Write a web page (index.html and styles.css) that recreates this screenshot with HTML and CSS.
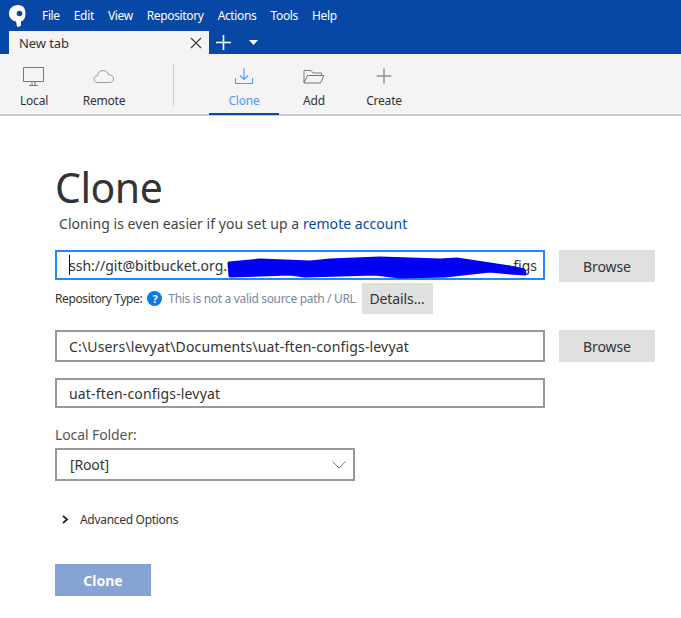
FILE: index.html
```html
<!DOCTYPE html>
<html lang="en">
<head>
<meta charset="utf-8">
<title>Clone</title>
<link rel="stylesheet" href="styles.css">
</head>
<body>
<header class="titlebar">
  <div class="menubar">
    <svg class="logo" width="26" height="26" viewBox="0 0 26 26"><path d="M3 10.500C3 5.500 7 2 12 2C17.500 2 19.500 6 19.500 10.500C19.500 15 18 17.500 15 18.500L15 22C15 23.500 13 24 11 23.500L10 18.500C5.500 17.500 3 14.500 3 10.500Z" fill="#fff"/><circle cx="13.500" cy="10.500" r="2.800" fill="#0747a6"/></svg>
    <nav class="menu"><span>File</span><span>Edit</span><span>View</span><span>Repository</span><span>Actions</span><span>Tools</span><span>Help</span></nav>
  </div>
  <div class="tabrow">
    <div class="tab"><span>New tab</span>
      <svg width="12" height="12" viewBox="0 0 12 12"><path d="M1 1L11 11M11 1L1 11" stroke="#444" stroke-width="1.300" fill="none"/></svg>
    </div>
    <svg class="plus" width="15" height="15" viewBox="0 0 15 15"><path d="M7.500 0V15M0 7.500H15" stroke="#fff" stroke-width="1.600"/></svg>
    <svg class="caret" width="9" height="5" viewBox="0 0 9 5"><path d="M0 0H9L4.500 5Z" fill="#fff"/></svg>
  </div>
</header>
<div class="toolbar">
  <div class="tool tool-first">
    <svg width="22" height="20" viewBox="0 0 22 20"><path d="M.5.500H20.500V14.500H.5ZM6 18.500H15M9 15V18M12 15V18" stroke="#777" fill="none"/></svg>
    <span>Local</span>
  </div>
  <div class="tool">
    <svg width="22" height="20" viewBox="0 0 22 20"><path d="M5 15.500C2.500 15.500 1 14 1 12C1 10 2.500 8.800 4.300 8.800C4.800 5.500 7.200 3.500 10 3.500C12.800 3.500 14.800 5.300 15.500 7.800C18.500 7.600 20.500 9.300 20.500 11.700C20.500 14 18.800 15.500 16.500 15.500Z" stroke="#999" fill="none"/></svg>
    <span>Remote</span>
  </div>
  <div class="divider"></div>
  <div class="tool active">
    <svg width="22" height="20" viewBox="0 0 22 20"><path d="M11 1V12M7 8.500L11 12.500L15 8.500M2.500 11V16.500H19.500V11" stroke="#4c9aff" stroke-width="1.100" fill="none"/></svg>
    <span>Clone</span>
  </div>
  <div class="tool">
    <svg width="22" height="20" viewBox="0 0 22 20"><path d="M1 16V3.500H8L10 6H18.500V8.500M1 16L4.500 8.500H21L17.500 16Z" stroke="#777" fill="none"/></svg>
    <span>Add</span>
  </div>
  <div class="tool">
    <svg width="22" height="20" viewBox="0 0 22 20"><path d="M11 1.500V16.500M3.500 9H18.500" stroke="#666" fill="none"/></svg>
    <span>Create</span>
  </div>
</div>
<main class="content">
  <h1 class="title">Clone</h1>
  <p class="lead">Cloning is even easier if you set up a <a class="link">remote account</a></p>
  <div class="row">
    <div class="field focus"><i class="cursor"></i><span>ssh://git@bitbucket.org.</span><span class="end">figs</span></div>
    <button class="btn">Browse</button>
  </div>
  <div class="status">
    <span class="status-label">Repository Type:</span>
    <span class="help">?</span>
    <span class="status-msg">This is not a valid source path / URL</span>
    <button class="btn details">Details...</button>
  </div>
  <div class="row row-path">
    <div class="field"><span class="loose">C:\Users\levyat\Documents\uat-ften-configs-levyat</span></div>
    <button class="btn">Browse</button>
  </div>
  <div class="row row-name">
    <div class="field"><span class="loose">uat-ften-configs-levyat</span></div>
  </div>
  <div class="folder-label">Local Folder:</div>
  <div class="field select"><span>[Root]</span>
    <svg width="14" height="8" viewBox="0 0 14 8"><path d="M.5.500L7 7L13.500.5" stroke="#777" fill="none"/></svg>
  </div>
  <div class="advanced">
    <svg width="7" height="9" viewBox="0 0 7 9"><path d="M1 .8L5 4.500L1 8.200" stroke="#222" stroke-width="1.800" fill="none"/></svg>
    <span>Advanced Options</span>
  </div>
  <button class="clone">Clone</button>
  <svg class="scribble" width="302" height="24" viewBox="0 0 302 24"><path d="M3 7L34 4L84 6L104 4L154 2L214 4L231 3L244 5L284 11L298 14L299 18L284 17L264 15L219 20L174 21L149 18L79 20L64 18L4 20Z" fill="#0000f5" stroke="#0000f5" stroke-width="3" stroke-linejoin="round"/></svg>
</main>
</body>
</html>
```
FILE: styles.css
```css
* { box-sizing: border-box; }
html, body { margin: 0; }
body {
  width: 681px;
  height: 618px;
  overflow: hidden;
  background: #fff;
  font-family: "Noto Sans", "Open Sans", sans-serif;
  color: #333;
}
.titlebar { background: #0747a6; height: 54px; }
.menubar { height: 31px; display: flex; align-items: center; padding-left: 6px; }
.logo { flex: none; }
.menu { display: flex; gap: 14px; margin-left: 10px; color: #fff; font-size: 12px; letter-spacing: -.35px; }
.tabrow { height: 23px; display: flex; align-items: center; padding-left: 9px; }
.tab {
  width: 200px;
  height: 23px;
  background: #f4f4f4;
  display: flex;
  align-items: center;
  justify-content: space-between;
  padding: 0 7px 0 10px;
  font-size: 13px;
  letter-spacing: -.1px;
}
.plus { margin-left: 7px; }
.caret { margin-left: 18px; }
.toolbar {
  height: 62px;
  background: #f4f4f4;
  border-bottom: 2px solid #ccc;
  display: flex;
  padding-left: 0;
}
.tool {
  width: 70px;
  height: 61px;
  display: flex;
  flex-direction: column;
  align-items: center;
  padding-top: 13px;
  gap: 6px;
  font-size: 12px;
  color: #333;
  letter-spacing: -.2px;
}
.tool-first { margin-left: -1px; }
.tool span { line-height: 16px; }
.divider { width: 1px; height: 42px; background: #ccc; margin: 10px 35px 0 34px; }
.active { color: #4c9aff; border-bottom: 2px solid #0747a6; }
.content { position: relative; padding: 44px 0 0 55px; }
.title { margin: 0; font-size: 41px; font-weight: 400; line-height: 54px; color: #333; letter-spacing: -.5px; }
.lead { margin: 0 0 16px 4px; font-size: 14px; line-height: 20px; color: #444; letter-spacing: .05px; }
.link { color: #0747a6; }
.row { display: flex; gap: 14px; align-items: flex-start; }
.field {
  width: 490px;
  height: 32px;
  border: 2px solid #999;
  background: #fff;
  display: flex;
  align-items: center;
  padding: 0 12px;
  font-size: 14px;
  color: #333;
  letter-spacing: -.15px;
  white-space: nowrap;
}
.loose { letter-spacing: .16px; }
.focus { height: 30px; border-color: #2684ff; position: relative; justify-content: space-between; padding-right: 6px; letter-spacing: 0; }
.cursor { position: absolute; left: 12px; top: 3px; width: 1px; height: 20px; background: #111; }
.btn {
  width: 96px;
  height: 32px;
  border: 0;
  padding: 0;
  background: #e0e0e0;
  font: inherit;
  font-size: 14px;
  color: #333;
  letter-spacing: -.1px;
}
.status { display: flex; align-items: center; height: 31px; margin-top: 1px; font-size: 12px; letter-spacing: -.38px; }
.status-label { color: #333; }
.help {
  width: 15px;
  height: 15px;
  border-radius: 50%;
  background: #0a78e6;
  color: #fff;
  display: flex;
  align-items: center;
  justify-content: center;
  font-size: 11px;
  font-weight: 700;
  margin: 0 6px 0 5px;
}
.status-msg { color: #7a869a; letter-spacing: -.33px; }
.details { width: 71px; height: 31px; margin-left: 6px; letter-spacing: -.1px; }
.row-path { margin-top: 16px; }
.row-name { margin-top: 16px; }
.row-name .field { height: 30px; }
.folder-label { margin-top: 17px; font-size: 14px; line-height: 20px; color: #555; letter-spacing: -.1px; }
.select { width: 300px; height: 33px; margin-top: 3px; justify-content: space-between; padding: 0 7px 0 13px; }
.advanced { display: flex; align-items: center; gap: 11px; margin: 30px 0 0 7px; height: 16px; font-size: 12px; letter-spacing: -.3px; color: #333; }
.clone {
  display: block;
  width: 96px;
  height: 32px;
  margin-top: 37px;
  border: 0;
  background: #85a3d3;
  color: #fff;
  font: inherit;
  font-size: 14px;
  font-weight: 700;
}
.scribble { position: absolute; left: 226px; top: 140px; }
```
